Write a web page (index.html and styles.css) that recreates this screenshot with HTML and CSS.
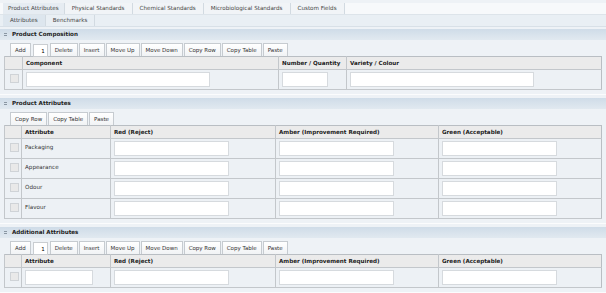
FILE: index.html
```html
<!DOCTYPE html>
<html lang="en">
<head>
    <meta charset="UTF-8">
    <title>Product Attributes</title>
    <link rel="stylesheet" href="styles.css">
</head>
<body>
    <div class="tabs main-tabs">
        <div class="tab active">Product Attributes</div>
        <div class="tab">Physical Standards</div>
        <div class="tab">Chemical Standards</div>
        <div class="tab">Microbiological Standards</div>
        <div class="tab">Custom Fields</div>
    </div>
    <div class="tabs sub-tabs">
        <div class="tab active">Attributes</div>
        <div class="tab">Benchmarks</div>
    </div>

    <div class="section">
        <div class="section-header"><span class="toggle"></span>Product Composition</div>
        <div class="section-body">
            <div class="toolbar">
                <button>Add</button><input class="count" value="1"><button>Delete</button><button>Insert</button><button>Move Up</button><button>Move Down</button><button>Copy Row</button><button>Copy Table</button><button>Paste</button>
            </div>
            <table class="grid composition">
                <colgroup><col style="width:18px"><col style="width:256px"><col style="width:68px"><col></colgroup>
                <tr class="head"><th></th><th>Component</th><th>Number / Quantity</th><th>Variety / Colour</th></tr>
                <tr class="row">
                    <td><span class="check"></span></td>
                    <td><input class="field w-comp"></td>
                    <td><input class="field w-num"></td>
                    <td><input class="field w-comp"></td>
                </tr>
            </table>
        </div>
    </div>

    <div class="section">
        <div class="section-header"><span class="toggle"></span>Product Attributes</div>
        <div class="section-body">
            <div class="toolbar">
                <button>Copy Row</button><button>Copy Table</button><button>Paste</button>
            </div>
            <table class="grid attrs">
                <colgroup><col style="width:17px"><col style="width:89px"><col style="width:165px"><col style="width:163px"><col></colgroup>
                <tr class="head"><th></th><th>Attribute</th><th>Red (Reject)</th><th>Amber (Improvement Required)</th><th>Green (Acceptable)</th></tr>
                <tr class="row"><td><span class="check"></span></td><td class="label">Packaging</td><td><input class="field"></td><td><input class="field"></td><td><input class="field"></td></tr>
                <tr class="row"><td><span class="check"></span></td><td class="label">Appearance</td><td><input class="field"></td><td><input class="field"></td><td><input class="field"></td></tr>
                <tr class="row"><td><span class="check"></span></td><td class="label">Odour</td><td><input class="field"></td><td><input class="field"></td><td><input class="field"></td></tr>
                <tr class="row"><td><span class="check"></span></td><td class="label">Flavour</td><td><input class="field"></td><td><input class="field"></td><td><input class="field"></td></tr>
            </table>
        </div>
    </div>

    <div class="section">
        <div class="section-header"><span class="toggle"></span>Additional Attributes</div>
        <div class="section-body">
            <div class="toolbar">
                <button>Add</button><input class="count" value="1"><button>Delete</button><button>Insert</button><button>Move Up</button><button>Move Down</button><button>Copy Row</button><button>Copy Table</button><button>Paste</button>
            </div>
            <table class="grid attrs">
                <colgroup><col style="width:17px"><col style="width:89px"><col style="width:165px"><col style="width:163px"><col></colgroup>
                <tr class="head"><th></th><th>Attribute</th><th>Red (Reject)</th><th>Amber (Improvement Required)</th><th>Green (Acceptable)</th></tr>
                <tr class="row"><td><span class="check"></span></td><td><input class="field w-attr"></td><td><input class="field"></td><td><input class="field"></td><td><input class="field"></td></tr>
            </table>
        </div>
    </div>
</body>
</html>
```

FILE: styles.css
```css
body {
    margin: 0;
    background: #eef2f6;
    font-family: "DejaVu Sans", Verdana, sans-serif;
    font-size: 5.6px;
    line-height: 7px;
    color: #333;
}
.tabs {
    display: flex;
    height: 12px;
    padding-left: 3px;
    box-sizing: border-box;
}
.main-tabs {
    margin-top: 3px;
    background: #f7f9fb;
    border-bottom: 1px solid #dde4ea;
}
.sub-tabs {
    background: #e9eff4;
    border-bottom: 1px solid #d8e0e7;
}
.tab {
    padding: 0 7px;
    line-height: 11px;
    border-right: 1px solid #d2dae1;
    color: #444;
}
.main-tabs .tab {
    background: #f1f4f7;
}
.main-tabs .tab.active {
    background: #e6ecf2;
    padding: 0 5px;
}
.sub-tabs .tab.active {
    background: #dde6ee;
}
.section {
    margin-top: 2px;
    border-bottom: 1px solid #fbfcfd;
    padding-bottom: 4px;
    margin-bottom: 3px;
}
.section-header {
    height: 11px;
    line-height: 11px;
    background: linear-gradient(#cfdce8, #e1e9f0);
    font-weight: bold;
    color: #222;
    padding-left: 12px;
    position: relative;
}
.toggle {
    position: absolute;
    left: 4px;
    top: 4px;
    width: 3px;
    height: 3px;
    border-top: 1px solid #8a96a2;
    border-bottom: 1px solid #8a96a2;
    box-sizing: border-box;
}
.section-body {
    padding: 3px 4px 0 4px;
}
.toolbar {
    display: flex;
    height: 13px;
    padding-left: 6px;
}
.toolbar button {
    font-family: inherit;
    font-size: 5.5px;
    color: #333;
    height: 13px;
    padding: 0 4px;
    margin: 0 1px 0 0;
    border: 1px solid #c6cbd0;
    border-bottom: none;
    background: linear-gradient(#ffffff, #f1f3f5);
}
.toolbar .count {
    width: 9px;
    height: 11px;
    margin: 1px 2px 0 1px;
    padding: 0 2px;
    border: 1px solid #c9cdd1;
    font-family: inherit;
    font-size: 5.5px;
    text-align: right;
    box-sizing: content-box;
}
.grid {
    width: 598px;
    border-collapse: collapse;
    table-layout: fixed;
    border: 1px solid #b9bec3;
}
.grid th {
    background: #ebebeb;
    height: 12px;
    padding: 0 3px;
    text-align: left;
    font-weight: bold;
    color: #222;
    border-left: 1px solid #c3c7cb;
    border-bottom: 1px solid #c3c7cb;
}
.grid td {
    background: #edf1f5;
    border-left: 1px solid #c3c7cb;
    border-bottom: 1px solid #c3c7cb;
    padding: 0 2px;
    vertical-align: top;
}
.composition .row {
    height: 20px;
}
.attrs .row {
    height: 20px;
}
.grid td.label {
    padding: 5px 3px 0 3px;
}
.check {
    display: block;
    width: 7px;
    height: 7px;
    margin: 4px 0 0 3px;
    border: 1px solid #cfd3d7;
    background: #e9e9e9;
}
.field {
    display: block;
    width: 115px;
    height: 15px;
    margin: 2px 0 0 1px;
    padding: 0;
    box-sizing: border-box;
    border: 1px solid #d6dade;
    background: #fff;
}
.w-comp {
    width: 184px;
}
.w-num {
    width: 46px;
}
.w-attr {
    width: 68px;
}
```
